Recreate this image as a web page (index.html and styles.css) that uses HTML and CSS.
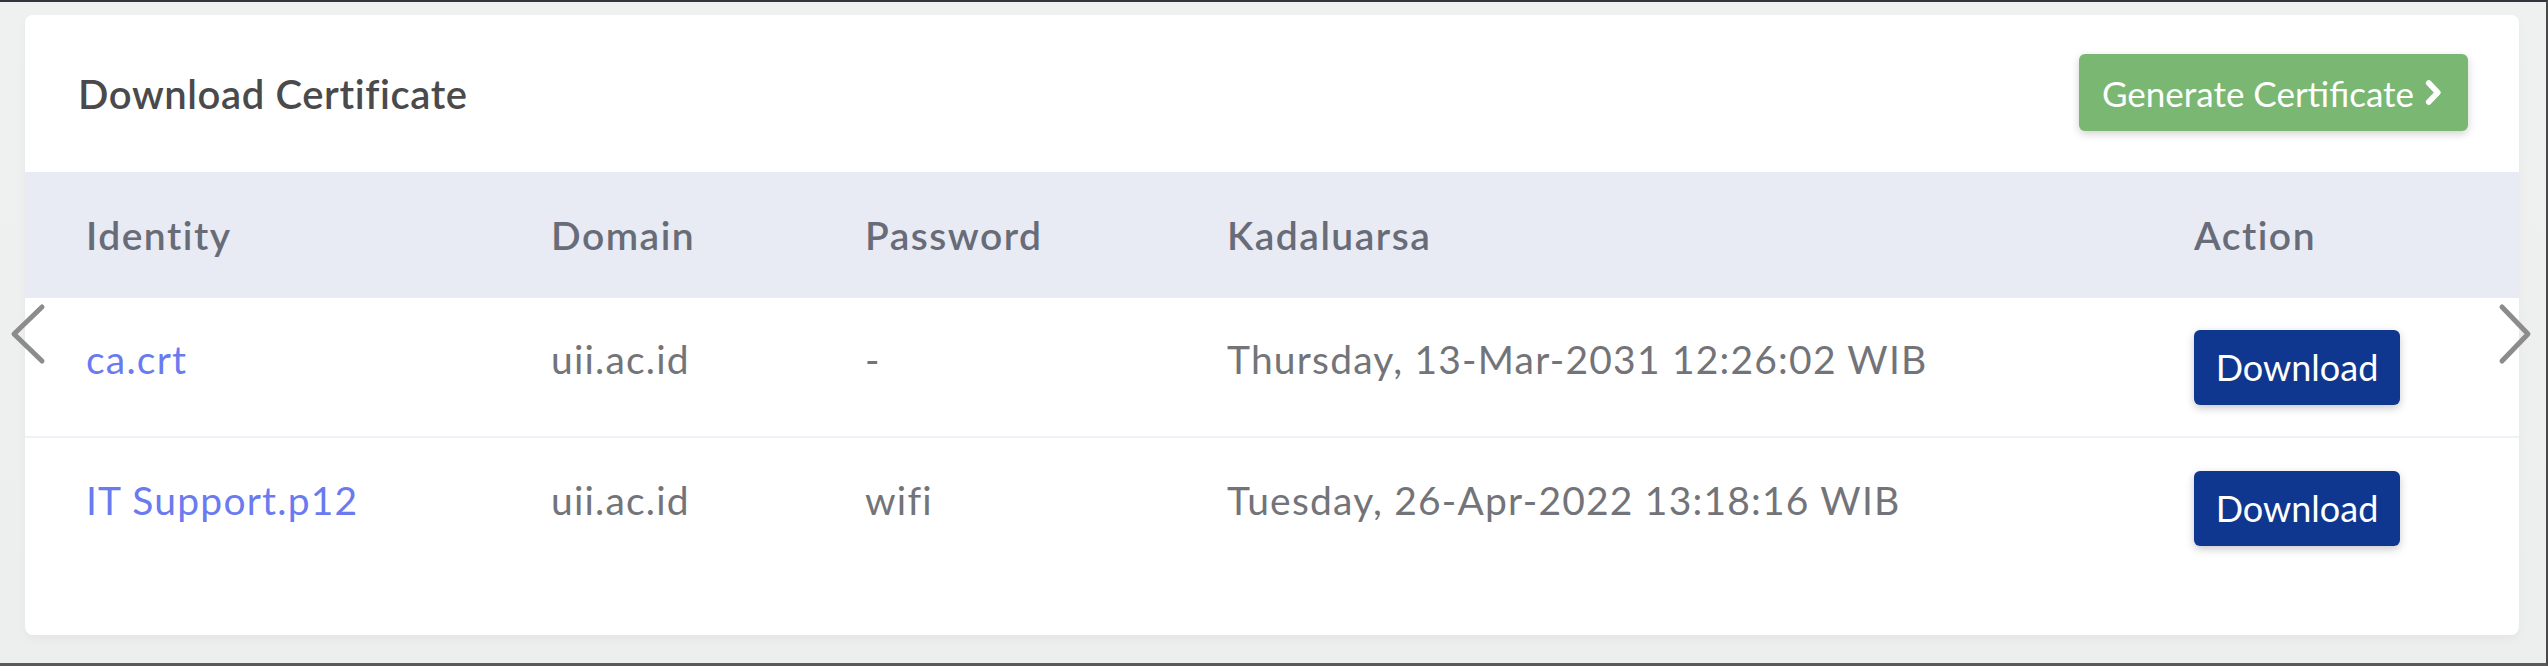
FILE: index.html
```html
<!DOCTYPE html>
<html lang="id">
<head>
<meta charset="utf-8">
<title>Download Certificate</title>
<link rel="stylesheet" href="styles.css">
</head>
<body>
<div class="frame">
  <div class="card">
    <div class="card-header">
      <h4 class="card-title">Download Certificate</h4>
      <button class="btn btn-green">Generate Certificate
        <svg class="btn-chevron" viewBox="0 0 20 28" width="19" height="27"><path d="M5 4 L14.5 14 L5 24" fill="none" stroke="#fff" stroke-width="6" stroke-linecap="round" stroke-linejoin="round"/></svg>
      </button>
    </div>
    <div class="table">
      <div class="row head">
        <div class="cell">Identity</div>
        <div class="cell">Domain</div>
        <div class="cell">Password</div>
        <div class="cell">Kadaluarsa</div>
        <div class="cell">Action</div>
      </div>
      <div class="row body">
        <div class="cell text"><a class="link" href="#">ca.crt</a></div>
        <div class="cell text">uii.ac.id</div>
        <div class="cell text">-</div>
        <div class="cell text">Thursday, 13-Mar-2031 12:26:02 WIB</div>
        <div class="cell"><button class="btn btn-blue">Download</button></div>
      </div>
      <div class="row body last">
        <div class="cell text"><a class="link" href="#">IT Support.p12</a></div>
        <div class="cell text">uii.ac.id</div>
        <div class="cell text">wifi</div>
        <div class="cell text">Tuesday, 26-Apr-2022 13:18:16 WIB</div>
        <div class="cell"><button class="btn btn-blue">Download</button></div>
      </div>
    </div>
  </div>
  <svg class="nav nav-prev" viewBox="0 0 40 64" width="40" height="64"><path d="M32 4 L4 31 L32 58" fill="none" stroke="#8c8c8c" stroke-width="5" stroke-linecap="round" stroke-linejoin="round"/></svg>
  <svg class="nav nav-next" viewBox="0 0 40 64" width="40" height="64"><path d="M8 4 L34 31 L8 58" fill="none" stroke="#8c8c8c" stroke-width="5" stroke-linecap="round" stroke-linejoin="round"/></svg>
</div>
</body>
</html>
```

FILE: styles.css
```css
* { box-sizing: border-box; }
html, body {
  margin: 0;
  padding: 0;
  width: 2548px;
  height: 666px;
  overflow: hidden;
  background: #eef0ef;
  font-family: "Lato", "Noto Sans", sans-serif;
}
.frame {
  position: relative;
  width: 2548px;
  height: 666px;
  border-top: 2px solid #30363c;
  border-right: 2px solid #4a4a4a;
  border-bottom: 3px solid #5a5a5a;
  padding: 13px 27px 0 25px;
  background: linear-gradient(180deg, #eff1f0 0%, #edefee 100%);
}
.card {
  width: 2494px;
  height: 620px;
  background: #fff;
  border-radius: 8px;
  box-shadow: 0 4px 10px rgba(0,0,0,0.04);
  overflow: hidden;
}
.card-header {
  height: 157px;
  display: flex;
  align-items: center;
  justify-content: space-between;
  padding: 0 51px 0 53px;
}
.card-title {
  margin: 0;
  font-size: 40px;
  font-weight: 600;
  color: #4a4a4c;
  letter-spacing: 0.6px;
}
.btn {
  border: none;
  font-family: "Lato", "Noto Sans", sans-serif;
  color: #fff;
  cursor: pointer;
  display: inline-flex;
  align-items: center;
}
.btn-green {
  height: 77px;
  width: 389px;
  padding: 0 20px 0 23px;
  background: #7ab772;
  border-radius: 6px;
  font-size: 35px;
  gap: 10px;
  box-shadow: 0 3px 8px rgba(0,0,0,0.18);
  margin-top: -2px;
}
.btn-chevron { display: block; }
.table { display: flex; flex-direction: column; }
.row {
  display: grid;
  grid-template-columns: 465px 314px 362px 967px 1fr;
  padding-left: 61px;
  align-items: center;
}
.row.head {
  height: 126px;
  background: #e8ebf3;
  color: #686c78;
  font-size: 39px;
  font-weight: 600;
  letter-spacing: 1.5px;
}
.row.body {
  height: 140px;
  border-bottom: 2px solid #eff1f6;
  color: #737479;
  font-size: 39px;
  letter-spacing: 1.2px;
}
.row.body.last { border-bottom: none; }
.cell.text { padding-bottom: 17px; }
.link { color: #6a7bef; text-decoration: none; }
.btn-blue {
  width: 206px;
  height: 75px;
  justify-content: center;
  background: #10378f;
  border-radius: 6px;
  font-size: 36px;
  letter-spacing: 0;
  box-shadow: 0 3px 8px rgba(0,0,0,0.22);
}
.nav { position: absolute; top: 301px; }
.nav-prev { left: 10px; }
.nav-next { left: 2494px; }
```
